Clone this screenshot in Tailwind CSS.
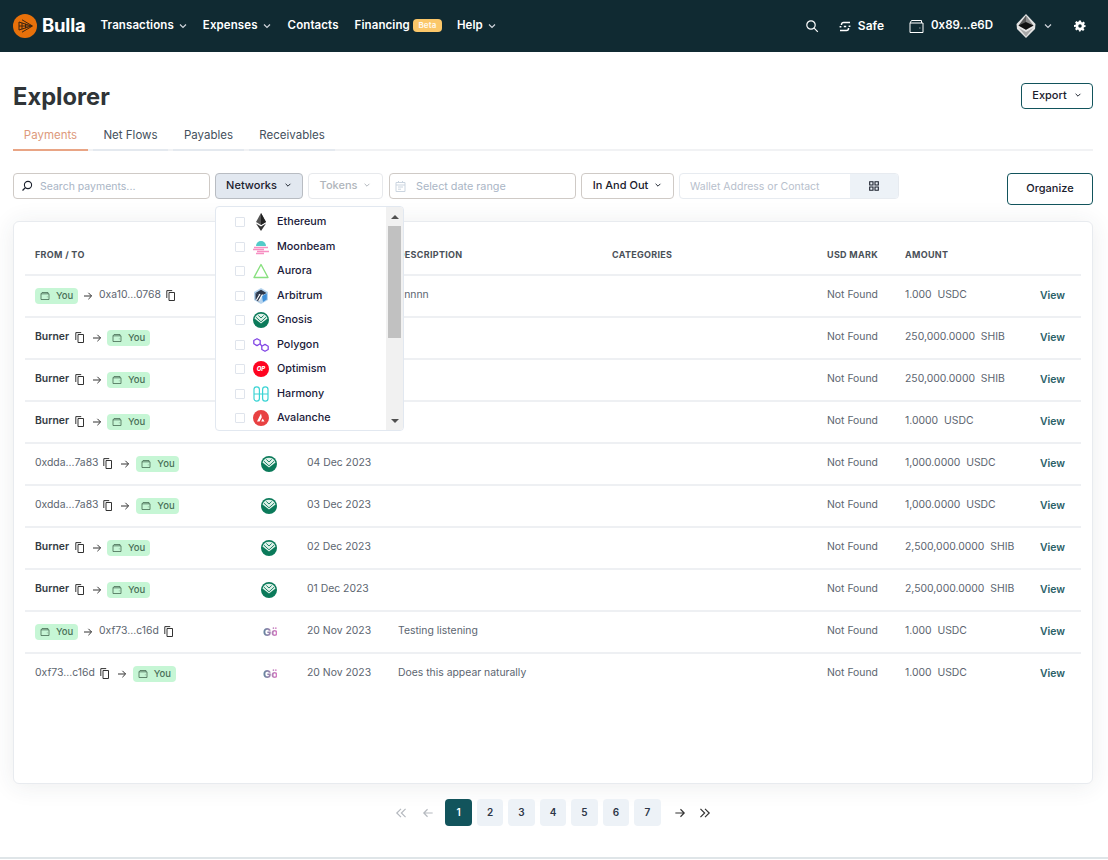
<!DOCTYPE html>
<html lang="en">
  <head>
    <meta charset="UTF-8" />
    <title>Bulla Explorer</title>
    <script src="https://cdn.jsdelivr.net/npm/@tailwindcss/browser@4"></script>
  </head>
  <body class="bg-white min-h-[860px] font-['Inter',sans-serif] text-[#2d3748] overflow-hidden">
    <svg class="hidden">
      <symbol id="chev" viewBox="0 0 10 10"><path d="M2 3.500 5 6.500 8 3.500" fill="none" stroke="currentColor" stroke-width="1.200" /></symbol>
      <symbol id="copy" viewBox="0 0 9 11"><path d="M3 2.500h5.500v8H3zM.8 8V.6h5.400" fill="none" stroke="currentColor" stroke-width="1" /></symbol>
      <symbol id="wallet" viewBox="0 0 12 12"><path d="M1.200 3.400 2.400 1.800h7.200v1.600M1.200 3.400h9.600v6.800H1.200zM8.300 7h.6" fill="none" stroke="currentColor" stroke-width="1" /></symbol>
      <symbol id="arrow" viewBox="0 0 12 12"><path d="M2 6h7.500M6.400 2.800 9.600 6l-3.200 3.200" fill="none" stroke="currentColor" stroke-width="1" /></symbol>
      <symbol id="gnosis" viewBox="0 0 16 16">
        <circle cx="8" cy="8" r="8" fill="#0b7a5a" />
        <path d="M1.500 6.500A6.800 6.800 0 0 1 14.500 6.500L8 11.500z" fill="#dff1e9" />
        <path d="M2.800 5 8 9.800 13.200 5M5.300 3.400 8 6l2.700-2.600" fill="none" stroke="#0b7a5a" stroke-width=".9" />
      </symbol>
    </svg>

    <header class="h-[52px] bg-[#102a32] text-white flex items-center pl-[13px] pr-[22px]">
      <svg class="w-6 h-6 shrink-0" viewBox="0 0 24 24">
        <circle cx="12" cy="12" r="12" fill="#e8710a" />
        <path d="M6 8 18.500 12 6 16zM9 5.800 19.500 12 9 18.200M6 12h12.500M9 8.800v6.400M12.500 9.800v4.400" fill="none" stroke="#3a2410" stroke-width="1" />
      </svg>
      <span class="ml-[5px] text-[18.500px] font-bold tracking-[-0.2px]">Bulla</span>
      <nav class="flex items-center ml-[15px] text-[11.500px] tracking-[0.1px] font-semibold">
        <span class="flex items-center">Transactions<svg class="w-[10px] h-[10px] ml-[4px] text-gray-300"><use href="#chev" /></svg></span>
        <span class="flex items-center ml-[15px]">Expenses<svg class="w-[10px] h-[10px] ml-[4px] text-gray-300"><use href="#chev" /></svg></span>
        <span class="ml-[16px]">Contacts</span>
        <span class="ml-[16px]">Financing</span>
        <span class="ml-[3px] -mt-[1px] w-[29px] text-center h-[13px] leading-[13px] rounded-[4px] bg-[#fbc769] text-[8px] font-semibold text-white/90">Beta</span>
        <span class="flex items-center ml-[15px]">Help<svg class="w-[10px] h-[10px] ml-[4px] text-gray-300"><use href="#chev" /></svg></span>
      </nav>
      <div class="ml-auto flex items-center text-[12px] font-semibold">
        <svg class="w-[14px] h-[14px]" viewBox="0 0 14 14"><circle cx="6" cy="6" r="4.200" fill="none" stroke="currentColor" stroke-width="1.200" /><path d="m9.200 9.200 3.600 3.600" stroke="currentColor" stroke-width="1.200" /></svg>
        <svg class="w-[12px] h-[13px] ml-[20px]" viewBox="0 0 12 13"><path d="M11 2.500H4.500A2 2 0 0 0 2.500 4.500v.6M1 10.500h6.500a2 2 0 0 0 2-2v-.6M4.800 6.500h2.400M.6 6.800h1.800M9.600 6.200h1.800" fill="none" stroke="currentColor" stroke-width="1.500" /></svg>
        <span class="ml-[7px]">Safe</span>
        <svg class="w-[15px] h-[15px] ml-[25px]" viewBox="0 0 15 15"><path d="M1 4 2.500 1.500h10V4M1 4h13v9.500H1zM10.500 9h.8" fill="none" stroke="currentColor" stroke-width="1" /></svg>
        <span class="ml-[7px] text-[11.500px]">0x89...e6D</span>
        <svg class="w-[20px] h-[24px] ml-[23px]" viewBox="0 0 20 24">
          <path d="M10 0 19.500 10 19 15 10 24 1 15 .5 10z" fill="#e4e4e4" />
          <path d="M10 1.500 2.500 11.500l7.500 4.200z" fill="#5a5a5a" />
          <path d="M10 1.500v14.200l7.500-4.200z" fill="#8c8c8c" />
          <path d="M10 8 2.500 11.500l7.500 4.200 7.500-4.200z" fill="#111" />
          <path d="m3 14 7 8.500 7-8.500-7 4z" fill="#a8a8a8" />
        </svg>
        <svg class="w-[10px] h-[10px] ml-[7px] text-gray-300"><use href="#chev" /></svg>
        <svg class="w-[12px] h-[12px] ml-[21px]" viewBox="0 0 24 24"><path fill="currentColor" fill-rule="evenodd" d="M10 1h4l.6 3.100 1.900.8 2.600-1.800 2.800 2.800-1.800 2.600.8 1.900L23 10v4l-3.100.6-.8 1.900 1.800 2.600-2.800 2.800-2.600-1.800-1.900.8L13 23h-3l-.6-3.100-1.900-.8-2.600 1.800-2.800-2.800 1.800-2.600-.8-1.900L0 14v-4l3.100-.6.8-1.900L2.100 4.900l2.800-2.800 2.600 1.800 1.900-.8zM12 8.500a3.500 3.500 0 1 0 0 7 3.500 3.500 0 0 0 0-7z" /></svg>
      </div>
    </header>

    <main class="pl-[13px] pr-[15px]">
      <div class="flex items-start justify-between pt-[31px] h-[71px]">
        <h1 class="text-[23.700px] font-bold leading-[28px] text-[#2f3437]">Explorer</h1>
        <button class="h-[26px] w-[72px] border border-[#12545c] rounded-[4px] text-[11px] font-medium flex items-center justify-center gap-[7px] pb-[2px] text-[#1a202c]">Export<svg class="w-[8px] h-[8px]"><use href="#chev" /></svg></button>
      </div>

      <div class="flex gap-[5px] h-[28px] border-b-2 border-[#f1f2f4] text-[11.500px] leading-[24px] text-[#44505c]">
        <span class="w-[75px] text-center h-[28px] border-b-2 border-[#e9a585] text-[#dd9a7c]">Payments</span>
        <span class="w-[75px] text-center h-[28px] border-b-2 border-[#e4e9ef]">Net Flows</span>
        <span class="w-[71px] text-center h-[28px] border-b-2 border-[#e4e9ef]">Payables</span>
        <span class="w-[86px] text-center h-[28px] border-b-2 border-[#e4e9ef]">Receivables</span>
      </div>

      <div class="flex mt-[22px] items-start text-[11px]">
        <div class="w-[197px] h-[26px] border border-[#cfcac6] rounded-[4px] flex items-center pl-[7px]">
          <svg class="w-[12px] h-[12px]" viewBox="0 0 12 12"><circle cx="7" cy="5" r="3.600" fill="none" stroke="#1a202c" stroke-width="1.100" /><path d="M4.400 7.600 1.500 10.500" stroke="#1a202c" stroke-width="1.300" /></svg>
          <span class="ml-[7px] mt-[2px] text-[10.500px] text-[#a9b5c5]">Search payments...</span>
        </div>
        <div class="relative ml-[5px]">
          <button class="w-[88px] h-[26px] bg-[#e2e8f0] border border-[#b8bcc2] rounded-[4px] font-medium flex items-center justify-center gap-[7px] pb-[2px] text-[#1a202c]">Networks<svg class="w-[8px] h-[8px]"><use href="#chev" /></svg></button>
          <div class="absolute left-0 top-[33px] z-10 w-[189px] h-[225px] bg-white border border-[#e2e8f0] rounded-[4px] flex overflow-hidden">
            <ul class="w-[171px] pt-[3px] text-[10.800px] font-medium text-[#1a1a3a]">
              <li class="h-[24.500px] flex items-center pl-[19px]"><span class="w-[10px] h-[10px] border border-[#dfe4ec] rounded-[1px]"></span>
                <svg class="w-[16px] h-[18px] ml-[8px]" viewBox="0 0 16 18"><path d="M8 0 3 9l5 3 5-3z" fill="#555" /><path d="M8 0v12l5-3z" fill="#222" /><path d="m3 10.500 5 7.500 5-7.500-5 3z" fill="#333" /></svg>
                <span class="ml-[8px]">Ethereum</span></li>
              <li class="h-[24.500px] flex items-center pl-[19px]"><span class="w-[10px] h-[10px] border border-[#dfe4ec] rounded-[1px]"></span>
                <svg class="w-[16px] h-[16px] ml-[8px]" viewBox="0 0 16 16"><path d="M3 7a5 5 0 0 1 10 0z" fill="#53cbc8" /><path d="M1 8.500h14M0 10.500h11M4 12.500h12M3 14.500h8" stroke="#f78fc2" stroke-width="1.300" /></svg>
                <span class="ml-[8px]">Moonbeam</span></li>
              <li class="h-[24.500px] flex items-center pl-[19px]"><span class="w-[10px] h-[10px] border border-[#dfe4ec] rounded-[1px]"></span>
                <svg class="w-[16px] h-[16px] ml-[8px]" viewBox="0 0 16 16"><path d="M8 1.500 15 14.500H1z" fill="none" stroke="#88e07f" stroke-width="1.400" stroke-linejoin="round" /></svg>
                <span class="ml-[8px]">Aurora</span></li>
              <li class="h-[24.500px] flex items-center pl-[19px]"><span class="w-[10px] h-[10px] border border-[#dfe4ec] rounded-[1px]"></span>
                <svg class="w-[16px] h-[16px] ml-[8px]" viewBox="0 0 16 16"><path d="M8 0 15 4v8l-7 4-7-4V4z" fill="#b6d4ee" /><path d="M8 1.800 13.500 5 8 8 2.500 5z" fill="#2c374b" /><path d="M9 8 13.800 5.500v6L10 14z" fill="#3f8fd8" /><path d="M2.500 5v6.500L6 14l2-6z" fill="#2c374b" /><path d="M3.500 12 7 6M5.500 13.500 9.500 6.500" stroke="#fff" stroke-width="1.200" /></svg>
                <span class="ml-[8px]">Arbitrum</span></li>
              <li class="h-[24.500px] flex items-center pl-[19px]"><span class="w-[10px] h-[10px] border border-[#dfe4ec] rounded-[1px]"></span>
                <svg class="w-[16px] h-[16px] ml-[8px]"><use href="#gnosis" /></svg>
                <span class="ml-[8px]">Gnosis</span></li>
              <li class="h-[24.500px] flex items-center pl-[19px]"><span class="w-[10px] h-[10px] border border-[#dfe4ec] rounded-[1px]"></span>
                <svg class="w-[16px] h-[16px] ml-[8px]" viewBox="0 0 16 16"><path d="M.8 3.500 4 1.700l3.200 1.800v3.300L4 8.600.8 6.800zM8.800 9.200 12 7.400l3.200 1.800v3.300L12 14.300l-3.200-1.800zM7.200 6.800l1.600 2.400" fill="none" stroke="#8247e5" stroke-width="1.300" stroke-linejoin="round" /></svg>
                <span class="ml-[8px]">Polygon</span></li>
              <li class="h-[24.500px] flex items-center pl-[19px]"><span class="w-[10px] h-[10px] border border-[#dfe4ec] rounded-[1px]"></span>
                <span class="ml-[8px] w-[16px] h-[16px] rounded-full bg-[#fe0420] flex items-center justify-center text-[6px] leading-none font-extrabold italic text-white">OP</span>
                <span class="ml-[8px]">Optimism</span></li>
              <li class="h-[24.500px] flex items-center pl-[19px]"><span class="w-[10px] h-[10px] border border-[#dfe4ec] rounded-[1px]"></span>
                <svg class="w-[16px] h-[16px] ml-[8px]" viewBox="0 0 16 16"><path d="M1 3.500a2.700 2.700 0 0 1 5.400 0v9a2.700 2.700 0 0 1-5.400 0zM9.600 3.500a2.700 2.700 0 0 1 5.400 0v9a2.700 2.700 0 0 1-5.400 0zM1 8h14" fill="none" stroke="#3bd4d4" stroke-width="1.200" /></svg>
                <span class="ml-[8px]">Harmony</span></li>
              <li class="h-[24.500px] flex items-center pl-[19px]"><span class="w-[10px] h-[10px] border border-[#dfe4ec] rounded-[1px]"></span>
                <svg class="w-[16px] h-[16px] ml-[8px]" viewBox="0 0 16 16"><circle cx="8" cy="8" r="8" fill="#e84142" /><path d="M8 3.500 4 11.500h2.600L8.800 7.300zM9.700 8.500l-1.500 3h3.300z" fill="#fff" /></svg>
                <span class="ml-[8px]">Avalanche</span></li>
            </ul>
            <div class="w-[17px] bg-[#f1f1f1] flex flex-col items-center">
              <span class="h-[19px] flex items-center"><span class="w-0 h-0 border-x-[4px] border-x-transparent border-b-[4px] border-b-[#505050]"></span></span>
              <span class="w-[13px] h-[112px] bg-[#c1c1c1]"></span>
              <span class="mt-auto h-[19px] flex items-center"><span class="w-0 h-0 border-x-[4px] border-x-transparent border-t-[4px] border-t-[#505050]"></span></span>
            </div>
          </div>
        </div>
        <button class="w-[75px] h-[26px] ml-[5px] border border-[#e7e9ec] rounded-[4px] font-medium flex items-center justify-center gap-[6px] pb-[2px] text-[#b0b5bb]">Tokens<svg class="w-[8px] h-[8px]"><use href="#chev" /></svg></button>
        <div class="w-[187px] h-[26px] ml-[6px] border border-[#cfcac6] rounded-[4px] flex items-center pl-[4px]">
          <svg class="w-[13px] h-[13px]" viewBox="0 0 13 13"><path d="M2 2.500h9v9H2zM2 5h9M4 7h5M4 9.200h3M4.500 1v2M8.500 1v2" fill="none" stroke="#cbd5e0" stroke-width="1" /></svg>
          <span class="ml-[9px] mt-[2px] text-[10.800px] text-[#a9b5c5]">Select date range</span>
        </div>
        <button class="w-[93px] h-[26px] ml-[5px] border border-[#cfcac6] rounded-[4px] font-medium flex items-center justify-center gap-[6px] pb-[2px] text-[#1a202c]">In And Out<svg class="w-[8px] h-[8px]"><use href="#chev" /></svg></button>
        <div class="w-[220px] h-[26px] ml-[5px] border border-[#e7ebf0] rounded-[4px] flex items-center overflow-hidden">
          <span class="flex-1 pl-[10px] mt-[2px] text-[10.500px] text-[#b7c0cc]">Wallet Address or Contact</span>
          <span class="w-[48px] h-full bg-[#edf2f7] flex items-center justify-center">
            <svg class="w-[10px] h-[10px]" viewBox="0 0 10 10"><path d="M.7.700h3.300v3.300H.7zM6 .7h3.300v3.300H6zM.7 6h3.300v3.300H.7zM6 6h3.300v3.300H6z" fill="none" stroke="#1a202c" stroke-width="1.100" /></svg>
          </span>
        </div>
        <button class="w-[86px] h-[32px] pb-[2px] ml-auto border border-[#12545c] rounded-[4px] font-medium text-[#1a202c]">Organize</button>
      </div>

      <section class="mt-[16px] h-[563px] border border-[#e8ebef] rounded-[6px] bg-white shadow-[0_2px_24px_rgba(45,55,72,0.09)] px-[11px] text-[10.400px] text-[#5c6570]">
        <div class="grid grid-cols-[226px_46px_91px_214px_215px_78px_135px_1fr] pl-[10px] h-[54px] items-center pt-[14px] border-b-2 border-[#eef0f3] text-[9px] font-bold tracking-[0.3px] text-[#4a5058]">
          <span>FROM / TO</span><span></span><span></span><span>DESCRIPTION</span><span>CATEGORIES</span><span>USD MARK</span><span>AMOUNT</span><span></span>
        </div>

        <div class="grid grid-cols-[226px_46px_91px_214px_215px_78px_135px_1fr] pl-[10px] h-[42px] pb-[2px] items-center border-b-2 border-[#eef0f3]">
          <div class="flex items-center"><span class="h-[16px] w-[43px] bg-[#c6f6d5] rounded-[4px] flex items-center justify-center gap-[6px] text-[9.500px] font-medium text-[#4a7058] mt-[2px]"><svg class="w-[10px] h-[10px]"><use href="#wallet" /></svg>You</span><svg class="w-[12px] h-[12px] ml-[4px] mt-[2px] text-[#333]"><use href="#arrow" /></svg><span class="ml-[5px]">0xa10...0768</span><svg class="w-[9px] h-[11px] ml-[5px] text-[#333]"><use href="#copy" /></svg></div>
          <span></span><span></span><span>nnnnn</span><span></span><span>Not Found</span><span>1.000&nbsp; USDC</span><span class="font-semibold text-[#2a6068] mt-[2px]">View</span>
        </div>
        <div class="grid grid-cols-[226px_46px_91px_214px_215px_78px_135px_1fr] pl-[10px] h-[42px] pb-[2px] items-center border-b-2 border-[#eef0f3]">
          <div class="flex items-center"><span class="font-semibold text-[#333a42]">Burner</span><svg class="w-[9px] h-[11px] ml-[6px] text-[#333]"><use href="#copy" /></svg><svg class="w-[12px] h-[12px] ml-[7px] mt-[2px] text-[#333]"><use href="#arrow" /></svg><span class="ml-[4px] h-[16px] w-[43px] bg-[#c6f6d5] rounded-[4px] flex items-center justify-center gap-[6px] text-[9.500px] font-medium text-[#4a7058] mt-[2px]"><svg class="w-[10px] h-[10px]"><use href="#wallet" /></svg>You</span></div>
          <span></span><span></span><span></span><span></span><span>Not Found</span><span>250,000.0000&nbsp; SHIB</span><span class="font-semibold text-[#2a6068] mt-[2px]">View</span>
        </div>
        <div class="grid grid-cols-[226px_46px_91px_214px_215px_78px_135px_1fr] pl-[10px] h-[42px] pb-[2px] items-center border-b-2 border-[#eef0f3]">
          <div class="flex items-center"><span class="font-semibold text-[#333a42]">Burner</span><svg class="w-[9px] h-[11px] ml-[6px] text-[#333]"><use href="#copy" /></svg><svg class="w-[12px] h-[12px] ml-[7px] mt-[2px] text-[#333]"><use href="#arrow" /></svg><span class="ml-[4px] h-[16px] w-[43px] bg-[#c6f6d5] rounded-[4px] flex items-center justify-center gap-[6px] text-[9.500px] font-medium text-[#4a7058] mt-[2px]"><svg class="w-[10px] h-[10px]"><use href="#wallet" /></svg>You</span></div>
          <span></span><span></span><span></span><span></span><span>Not Found</span><span>250,000.0000&nbsp; SHIB</span><span class="font-semibold text-[#2a6068] mt-[2px]">View</span>
        </div>
        <div class="grid grid-cols-[226px_46px_91px_214px_215px_78px_135px_1fr] pl-[10px] h-[42px] pb-[2px] items-center border-b-2 border-[#eef0f3]">
          <div class="flex items-center"><span class="font-semibold text-[#333a42]">Burner</span><svg class="w-[9px] h-[11px] ml-[6px] text-[#333]"><use href="#copy" /></svg><svg class="w-[12px] h-[12px] ml-[7px] mt-[2px] text-[#333]"><use href="#arrow" /></svg><span class="ml-[4px] h-[16px] w-[43px] bg-[#c6f6d5] rounded-[4px] flex items-center justify-center gap-[6px] text-[9.500px] font-medium text-[#4a7058] mt-[2px]"><svg class="w-[10px] h-[10px]"><use href="#wallet" /></svg>You</span></div>
          <span></span><span></span><span></span><span></span><span>Not Found</span><span>1.0000&nbsp; USDC</span><span class="font-semibold text-[#2a6068] mt-[2px]">View</span>
        </div>
        <div class="grid grid-cols-[226px_46px_91px_214px_215px_78px_135px_1fr] pl-[10px] h-[42px] pb-[2px] items-center border-b-2 border-[#eef0f3]">
          <div class="flex items-center"><span>0xdda...7a83</span><svg class="w-[9px] h-[11px] ml-[5px] text-[#333]"><use href="#copy" /></svg><svg class="w-[12px] h-[12px] ml-[7px] mt-[2px] text-[#333]"><use href="#arrow" /></svg><span class="ml-[5px] h-[16px] w-[43px] bg-[#c6f6d5] rounded-[4px] flex items-center justify-center gap-[6px] text-[9.500px] font-medium text-[#4a7058] mt-[2px]"><svg class="w-[10px] h-[10px]"><use href="#wallet" /></svg>You</span></div>
          <svg class="w-[16px] h-[16px] mt-[2px]"><use href="#gnosis" /></svg><span>04 Dec 2023</span><span></span><span></span><span>Not Found</span><span>1,000.0000&nbsp; USDC</span><span class="font-semibold text-[#2a6068] mt-[2px]">View</span>
        </div>
        <div class="grid grid-cols-[226px_46px_91px_214px_215px_78px_135px_1fr] pl-[10px] h-[42px] pb-[2px] items-center border-b-2 border-[#eef0f3]">
          <div class="flex items-center"><span>0xdda...7a83</span><svg class="w-[9px] h-[11px] ml-[5px] text-[#333]"><use href="#copy" /></svg><svg class="w-[12px] h-[12px] ml-[7px] mt-[2px] text-[#333]"><use href="#arrow" /></svg><span class="ml-[5px] h-[16px] w-[43px] bg-[#c6f6d5] rounded-[4px] flex items-center justify-center gap-[6px] text-[9.500px] font-medium text-[#4a7058] mt-[2px]"><svg class="w-[10px] h-[10px]"><use href="#wallet" /></svg>You</span></div>
          <svg class="w-[16px] h-[16px] mt-[2px]"><use href="#gnosis" /></svg><span>03 Dec 2023</span><span></span><span></span><span>Not Found</span><span>1,000.0000&nbsp; USDC</span><span class="font-semibold text-[#2a6068] mt-[2px]">View</span>
        </div>
        <div class="grid grid-cols-[226px_46px_91px_214px_215px_78px_135px_1fr] pl-[10px] h-[42px] pb-[2px] items-center border-b-2 border-[#eef0f3]">
          <div class="flex items-center"><span class="font-semibold text-[#333a42]">Burner</span><svg class="w-[9px] h-[11px] ml-[6px] text-[#333]"><use href="#copy" /></svg><svg class="w-[12px] h-[12px] ml-[7px] mt-[2px] text-[#333]"><use href="#arrow" /></svg><span class="ml-[4px] h-[16px] w-[43px] bg-[#c6f6d5] rounded-[4px] flex items-center justify-center gap-[6px] text-[9.500px] font-medium text-[#4a7058] mt-[2px]"><svg class="w-[10px] h-[10px]"><use href="#wallet" /></svg>You</span></div>
          <svg class="w-[16px] h-[16px] mt-[2px]"><use href="#gnosis" /></svg><span>02 Dec 2023</span><span></span><span></span><span>Not Found</span><span>2,500,000.0000&nbsp; SHIB</span><span class="font-semibold text-[#2a6068] mt-[2px]">View</span>
        </div>
        <div class="grid grid-cols-[226px_46px_91px_214px_215px_78px_135px_1fr] pl-[10px] h-[42px] pb-[2px] items-center border-b-2 border-[#eef0f3]">
          <div class="flex items-center"><span class="font-semibold text-[#333a42]">Burner</span><svg class="w-[9px] h-[11px] ml-[6px] text-[#333]"><use href="#copy" /></svg><svg class="w-[12px] h-[12px] ml-[7px] mt-[2px] text-[#333]"><use href="#arrow" /></svg><span class="ml-[4px] h-[16px] w-[43px] bg-[#c6f6d5] rounded-[4px] flex items-center justify-center gap-[6px] text-[9.500px] font-medium text-[#4a7058] mt-[2px]"><svg class="w-[10px] h-[10px]"><use href="#wallet" /></svg>You</span></div>
          <svg class="w-[16px] h-[16px] mt-[2px]"><use href="#gnosis" /></svg><span>01 Dec 2023</span><span></span><span></span><span>Not Found</span><span>2,500,000.0000&nbsp; SHIB</span><span class="font-semibold text-[#2a6068] mt-[2px]">View</span>
        </div>
        <div class="grid grid-cols-[226px_46px_91px_214px_215px_78px_135px_1fr] pl-[10px] h-[42px] pb-[2px] items-center border-b-2 border-[#eef0f3]">
          <div class="flex items-center"><span class="h-[16px] w-[43px] bg-[#c6f6d5] rounded-[4px] flex items-center justify-center gap-[6px] text-[9.500px] font-medium text-[#4a7058] mt-[2px]"><svg class="w-[10px] h-[10px]"><use href="#wallet" /></svg>You</span><svg class="w-[12px] h-[12px] ml-[4px] mt-[2px] text-[#333]"><use href="#arrow" /></svg><span class="ml-[5px]">0xf73...c16d</span><svg class="w-[9px] h-[11px] ml-[5px] text-[#333]"><use href="#copy" /></svg></div>
          <span class="pl-[2px] text-[11px] font-extrabold leading-none bg-gradient-to-r from-[#3f8496] to-[#d878c4] bg-clip-text text-transparent w-[16px] mt-[2px]">Gö</span><span>20 Nov 2023</span><span>Testing listening</span><span></span><span>Not Found</span><span>1.000&nbsp; USDC</span><span class="font-semibold text-[#2a6068] mt-[2px]">View</span>
        </div>
        <div class="grid grid-cols-[226px_46px_91px_214px_215px_78px_135px_1fr] pl-[10px] h-[42px] pb-[2px] items-center border-b-2 border-transparent">
          <div class="flex items-center"><span>0xf73...c16d</span><svg class="w-[9px] h-[11px] ml-[5px] text-[#333]"><use href="#copy" /></svg><svg class="w-[12px] h-[12px] ml-[7px] mt-[2px] text-[#333]"><use href="#arrow" /></svg><span class="ml-[5px] h-[16px] w-[43px] bg-[#c6f6d5] rounded-[4px] flex items-center justify-center gap-[6px] text-[9.500px] font-medium text-[#4a7058] mt-[2px]"><svg class="w-[10px] h-[10px]"><use href="#wallet" /></svg>You</span></div>
          <span class="pl-[2px] text-[11px] font-extrabold leading-none bg-gradient-to-r from-[#3f8496] to-[#d878c4] bg-clip-text text-transparent w-[16px] mt-[2px]">Gö</span><span>20 Nov 2023</span><span>Does this appear naturally</span><span></span><span>Not Found</span><span>1.000&nbsp; USDC</span><span class="font-semibold text-[#2a6068] mt-[2px]">View</span>
        </div>
      </section>

      <div class="flex items-center justify-center mt-[15px] text-[10px] font-semibold text-[#2d3748]">
        <svg class="w-[12px] h-[12px] text-[#b5b9bf]" viewBox="0 0 10 10"><path d="M5 1.500 1.500 5 5 8.500M8.800 1.500 5.300 5l3.500 3.500" fill="none" stroke="currentColor" stroke-width="1" /></svg>
        <svg class="w-[14px] h-[14px] ml-[14px] text-[#b5b9bf]" viewBox="0 0 12 12"><path d="M10 6H2.500M5.600 2.800 2.400 6l3.200 3.200" fill="none" stroke="currentColor" stroke-width="1" /></svg>
        <span class="ml-[10px] w-[27px] h-[27px] rounded-[4px] bg-[#12545c] text-white flex items-center justify-center">1</span>
        <span class="ml-[5px] w-[26px] h-[27px] rounded-[4px] bg-[#edf2f7] flex items-center justify-center">2</span>
        <span class="ml-[5px] w-[27px] h-[27px] rounded-[4px] bg-[#edf2f7] flex items-center justify-center">3</span>
        <span class="ml-[5px] w-[26px] h-[27px] rounded-[4px] bg-[#edf2f7] flex items-center justify-center">4</span>
        <span class="ml-[5px] w-[27px] h-[27px] rounded-[4px] bg-[#edf2f7] flex items-center justify-center">5</span>
        <span class="ml-[5px] w-[26px] h-[27px] rounded-[4px] bg-[#edf2f7] flex items-center justify-center">6</span>
        <span class="ml-[5px] w-[27px] h-[27px] rounded-[4px] bg-[#edf2f7] flex items-center justify-center">7</span>
        <svg class="w-[14px] h-[14px] ml-[12px] text-[#333]"><use href="#arrow" /></svg>
        <svg class="w-[12px] h-[12px] ml-[12px] text-[#333]" viewBox="0 0 10 10"><path d="M1.200 1.500 4.700 5 1.200 8.500M5 1.500 8.500 5 5 8.500" fill="none" stroke="currentColor" stroke-width="1" /></svg>
      </div>
    </main>
    <div class="mt-[31px] border-t-2 border-[#dfe5e8]"></div>
  </body>
</html>
